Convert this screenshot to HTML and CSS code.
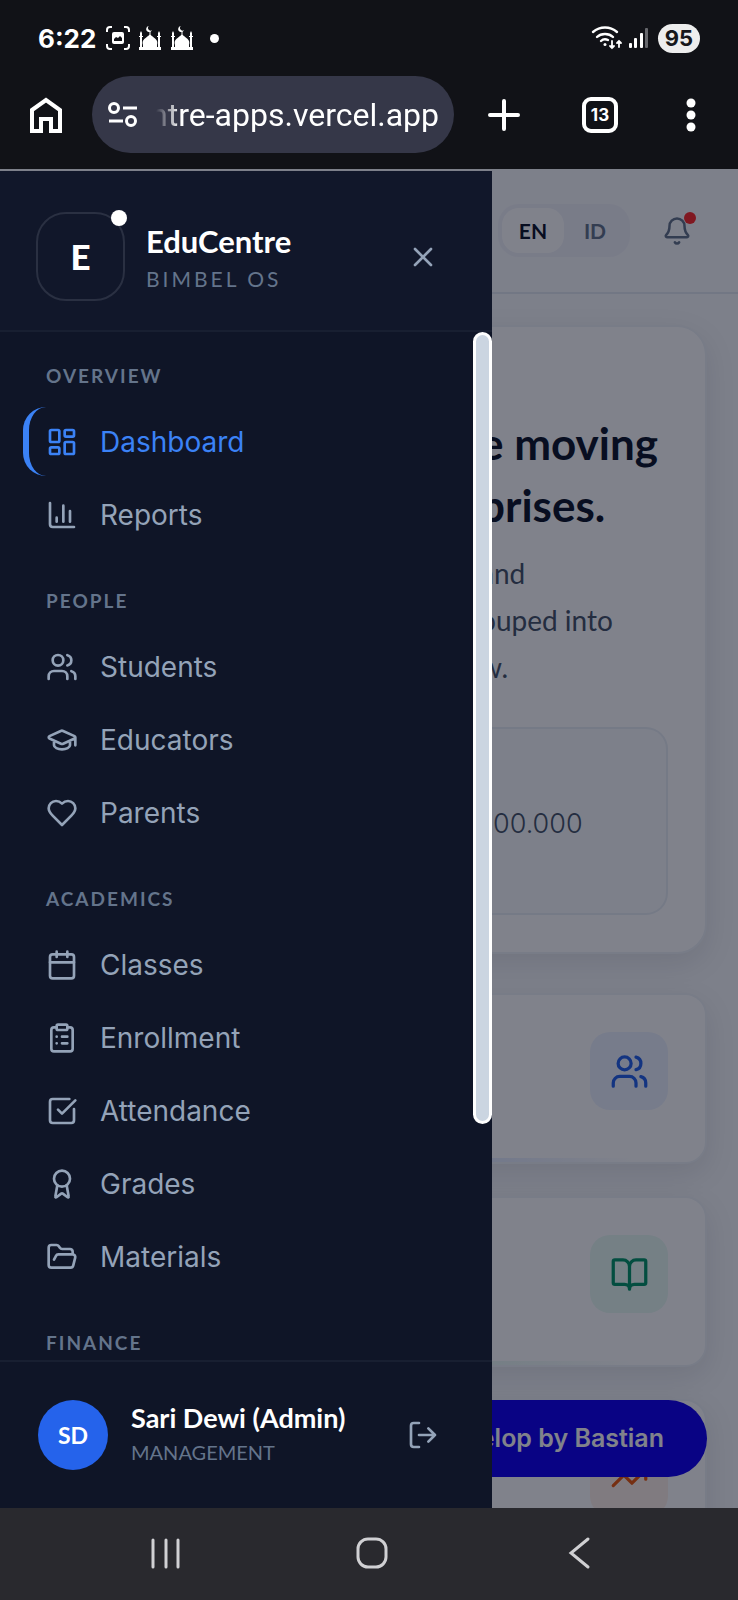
FILE: index.html
```html
<!DOCTYPE html>
<html lang="en">
<head>
    <meta charset="UTF-8">
    <meta name="viewport" content="width=device-width, initial-scale=1.0">
    <title>EduCentre</title>
    <link rel="stylesheet" href="styles.css">
</head>
<body>
    <!-- Shared shapes -->
    <svg class="defs" width="0" height="0">
        <symbol id="users" viewBox="0 0 24 24"><path d="M16 21v-2a4 4 0 0 0-4-4H6a4 4 0 0 0-4 4v2"/><circle cx="9" cy="7" r="4"/><path d="M22 21v-2a4 4 0 0 0-3-3.87M16 3.13a4 4 0 0 1 0 7.75"/></symbol>
        <symbol id="mosque" viewBox="0 0 22 24"><path d="M0 21h22v3H0zM1 7l1-2 1 2v14H1zM19 7l1-2 1 2v14h-2zM4 21v-2c-2-6 4-7 7-11 3 4 9 5 7 11v2zM0 10h4v1H0zM18 10h4v1h-4zM10.500 5h1v4h-1z"/><path d="M10 0a3 3 0 1 0 3 4 2.300 2.300 0 0 1-3-4z"/></symbol>
    </svg>

    <div class="status-bar">
        <span class="clock">6:22</span>
        <svg class="capture" viewBox="0 0 24 24"><path d="M1 6V4a3 3 0 0 1 3-3h2M18 1h2a3 3 0 0 1 3 3v2M23 18v2a3 3 0 0 1-3 3h-2M6 23H4a3 3 0 0 1-3-3v-2" fill="none" stroke="#fff" stroke-width="2"/><rect x="6" y="6" width="12" height="12" rx="2" fill="#fff"/><path d="M8 15v-2l2-2 2 1 2-2 2 2v3z" fill="#111217"/></svg>
        <svg class="mosque"><use href="#mosque"/></svg>
        <svg class="mosque"><use href="#mosque"/></svg>
        <span class="more-dot"></span>
        <div class="status-right">
            <svg width="32" height="26" viewBox="0 0 32 26" fill="none" stroke="#fff" stroke-width="2.400" stroke-linecap="round"><path d="M2 7c7-6 17-6 24 0M6 12c4-4 12-4 16 0M10 16c2-2 5-2 7-1"/><circle cx="14" cy="19.500" r="1.500" fill="#fff" stroke="none"/><path d="M21 16v7m-2-2 2 2 2-2M28 22v-6m-2 2 2-2 2 2" stroke-width="1.800"/></svg>
            <svg width="20" height="20" viewBox="0 0 20 20" fill="#fff"><rect y="15" width="3" height="5" rx="1"/><rect x="5" y="10" width="3" height="10" rx="1"/><rect x="11" y="5" width="3" height="15" rx="1"/><rect x="16" width="3" height="20" rx="1" fill="#66676c"/></svg>
            <span class="battery">95</span>
        </div>
    </div>

    <div class="browser-bar">
        <button class="bar-btn" aria-label="Home">
            <svg width="32" height="36" viewBox="0 0 32 36" fill="none" stroke="#fff" stroke-width="4"><path d="M2 13 16 3l14 10v21h-9V22H11v12H2z"/></svg>
        </button>
        <div class="address">
            <svg width="30" height="26" viewBox="0 0 30 26" fill="none" stroke="#fff" stroke-width="3"><circle cx="6" cy="6" r="4.500"/><path d="M15 6h14M1 19h14"/><circle cx="23" cy="19" r="4.500"/></svg>
            <span class="url">ntre-apps.vercel.app</span>
        </div>
        <button class="bar-btn new-tab" aria-label="New tab">
            <svg width="32" height="32" viewBox="0 0 32 32" stroke="#fff" stroke-width="4" stroke-linecap="round"><path d="M16 2v28M2 16h28"/></svg>
        </button>
        <button class="bar-btn tabs">13</button>
        <button class="bar-btn" aria-label="Menu">
            <svg width="10" height="34" viewBox="0 0 10 34" fill="#fff"><circle cx="5" cy="5" r="4.500"/><circle cx="5" cy="17" r="4.500"/><circle cx="5" cy="29" r="4.500"/></svg>
        </button>
    </div>

    <div class="screen">
        <div class="topbar">
            <div class="lang">
                <button class="lang-btn selected">EN</button>
                <button class="lang-btn">ID</button>
            </div>
            <button class="bell" aria-label="Notifications">
                <svg class="icon" viewBox="0 0 24 24"><path d="M10.270 21a2 2 0 0 0 3.460 0M3.260 15.330A1 1 0 0 0 4 17h16a1 1 0 0 0 .74-1.670C19.410 13.960 18 12.500 18 8A6 6 0 0 0 6 8c0 4.500-1.410 5.960-2.740 7.330"/></svg>
                <span class="bell-dot"></span>
            </button>
        </div>

        <main>
            <section class="card hero">
                <h1>e moving<br>prises.</h1>
                <p>and<br>ouped into<br>w.</p>
                <div class="amount">00.000</div>
            </section>
            <section class="card stat blue">
                <span class="tile"><svg class="icon"><use href="#users"/></svg></span>
            </section>
            <section class="card stat green">
                <span class="tile"><svg class="icon" viewBox="0 0 24 24"><path d="M12 7v14M3 18a1 1 0 0 1-1-1V4a1 1 0 0 1 1-1h5a4 4 0 0 1 4 4 4 4 0 0 1 4-4h5a1 1 0 0 1 1 1v13a1 1 0 0 1-1 1h-6a3 3 0 0 0-3 3 3 3 0 0 0-3-3z"/></svg></span>
            </section>
            <section class="card stat orange">
                <span class="tile"><svg class="icon" viewBox="0 0 24 24"><path d="m22 7-8.500 8.500-5-5L2 17M16 7h6v6"/></svg></span>
            </section>
        </main>

        <a class="credit" href="#">elop by Bastian</a>
        <div class="overlay"></div>

        <aside class="drawer">
            <div class="drawer-head">
                <div class="logo">E<span class="logo-dot"></span></div>
                <div class="brand">
                    <div class="brand-name">EduCentre</div>
                    <div class="brand-sub">BIMBEL OS</div>
                </div>
                <button class="drawer-btn" aria-label="Close">
                    <svg class="icon" viewBox="0 0 24 24"><path d="M18 6 6 18M6 6l12 12"/></svg>
                </button>
            </div>

            <div class="menu">
                <nav>
                    <h2>OVERVIEW</h2>
                    <a class="item active" href="#"><svg class="icon" viewBox="0 0 24 24"><rect x="3" y="3" width="7" height="9" rx="1"/><rect x="14" y="3" width="7" height="5" rx="1"/><rect x="14" y="12" width="7" height="9" rx="1"/><rect x="3" y="16" width="7" height="5" rx="1"/></svg>Dashboard</a>
                    <a class="item" href="#"><svg class="icon" viewBox="0 0 24 24"><path d="M3 3v16a2 2 0 0 0 2 2h16M8 17v-3M13 17V5M18 17V9"/></svg>Reports</a>

                    <h2>PEOPLE</h2>
                    <a class="item" href="#"><svg class="icon"><use href="#users"/></svg>Students</a>
                    <a class="item" href="#"><svg class="icon" viewBox="0 0 24 24"><path d="M21.400 10.900a1 1 0 0 0 0-1.800l-8.600-3.900a2 2 0 0 0-1.700 0l-8.500 3.900a1 1 0 0 0 0 1.800l8.600 3.900a2 2 0 0 0 1.700 0zM22 10v6M6 12.500V16a6 3 0 0 0 12 0v-3.500"/></svg>Educators</a>
                    <a class="item" href="#"><svg class="icon" viewBox="0 0 24 24"><path d="M19 14c1.500-1.500 3-3.200 3-5.500A5.500 5.500 0 0 0 16.500 3c-1.800 0-3 .5-4.500 2-1.500-1.500-2.700-2-4.500-2A5.500 5.500 0 0 0 2 8.500c0 2.300 1.500 4 3 5.500l7 7z"/></svg>Parents</a>

                    <h2>ACADEMICS</h2>
                    <a class="item" href="#"><svg class="icon" viewBox="0 0 24 24"><path d="M8 2v4M16 2v4M3 10h18"/><rect x="3" y="4" width="18" height="18" rx="2"/></svg>Classes</a>
                    <a class="item" href="#"><svg class="icon" viewBox="0 0 24 24"><rect x="8" y="2" width="8" height="4" rx="1"/><path d="M16 4h2a2 2 0 0 1 2 2v14a2 2 0 0 1-2 2H6a2 2 0 0 1-2-2V6a2 2 0 0 1 2-2h2M12 11h4M12 16h4M8 11h.01M8 16h.01"/></svg>Enrollment</a>
                    <a class="item" href="#"><svg class="icon" viewBox="0 0 24 24"><path d="M21 10.500V19a2 2 0 0 1-2 2H5a2 2 0 0 1-2-2V5a2 2 0 0 1 2-2h12.500M9 11l3 3L22 4"/></svg>Attendance</a>
                    <a class="item" href="#"><svg class="icon" viewBox="0 0 24 24"><path d="m15.500 12.900 1.500 8.500a.5.5 0 0 1-.8.500l-3.600-2.700a1 1 0 0 0-1.200 0l-3.600 2.700a.5.5 0 0 1-.8-.500l1.500-8.500"/><circle cx="12" cy="8" r="6"/></svg>Grades</a>
                    <a class="item" href="#"><svg class="icon" viewBox="0 0 24 24"><path d="m6 14 1.500-2.900A2 2 0 0 1 9.200 10H20a2 2 0 0 1 1.900 2.500l-1.500 6a2 2 0 0 1-2 1.500H4a2 2 0 0 1-2-2V5a2 2 0 0 1 2-2h3.900a2 2 0 0 1 1.700.9l.8 1.200a2 2 0 0 0 1.700.9H18a2 2 0 0 1 2 2v2"/></svg>Materials</a>

                    <h2>FINANCE</h2>
                </nav>
                <div class="scroll-thumb"></div>
            </div>

            <div class="drawer-foot">
                <div class="avatar">SD</div>
                <div class="user">
                    <div class="user-name">Sari Dewi (Admin)</div>
                    <div class="user-role">MANAGEMENT</div>
                </div>
                <button class="drawer-btn" aria-label="Log out">
                    <svg class="icon" viewBox="0 0 24 24"><path d="M9 21H5a2 2 0 0 1-2-2V5a2 2 0 0 1 2-2h4M16 17l5-5-5-5M21 12H9"/></svg>
                </button>
            </div>
        </aside>
    </div>

    <div class="system-nav">
        <button aria-label="Recents"><svg width="32" height="32" viewBox="0 0 32 32"><path d="M3 2v27M16 2v27M28 2v27"/></svg></button>
        <button aria-label="Home screen"><svg width="32" height="32" viewBox="0 0 32 32"><rect x="2" y="1" width="28" height="28" rx="10"/></svg></button>
        <button aria-label="Back"><svg width="32" height="32" viewBox="0 0 32 32"><path d="M25 1 8 15l17 14"/></svg></button>
    </div>
</body>
</html>
```
FILE: styles.css
```css
* {
    box-sizing: border-box;
}

body {
    margin: 0;
    height: 100vh;
    display: flex;
    flex-direction: column;
    background-color: #111217;
    font-family: Lato, "Open Sans", sans-serif;
    overflow: hidden;
}

button {
    background: none;
    border: none;
    padding: 0;
    font: inherit;
    color: inherit;
    cursor: pointer;
}

a {
    color: inherit;
    text-decoration: none;
}

svg {
    display: block;
    flex-shrink: 0;
    overflow: visible;
}

.defs {
    position: absolute;
}

.icon {
    width: 32px;
    height: 32px;
    fill: none;
    stroke: currentColor;
    stroke-width: 2;
    stroke-linecap: round;
    stroke-linejoin: round;
}

/* Android status bar */
.status-bar {
    height: 76px;
    padding: 0 38px;
    display: flex;
    align-items: center;
    color: #fff;
    font-family: Inter, sans-serif;
    flex-shrink: 0;
}

.clock {
    font-size: 26px;
    font-weight: 700;
    margin-right: 10px;
}

.capture {
    width: 24px;
    height: 24px;
    margin-right: 9px;
}

.mosque {
    width: 22px;
    height: 24px;
    margin-right: 10px;
    fill: #fff;
}

.more-dot {
    width: 9px;
    height: 9px;
    margin-left: 7px;
    border-radius: 50%;
    background-color: #fff;
}

.status-right {
    margin-left: auto;
    display: flex;
    align-items: center;
    gap: 6px;
}

.battery {
    width: 42px;
    height: 29px;
    line-height: 29px;
    margin-left: 3px;
    border-radius: 15px;
    background-color: #ededed;
    color: #16171b;
    font-size: 22px;
    font-weight: 700;
    text-align: center;
}

/* Browser toolbar */
.browser-bar {
    height: 93px;
    padding: 0 42px 16px 30px;
    display: flex;
    align-items: center;
    flex-shrink: 0;
}

.address {
    flex: 1;
    min-width: 0;
    height: 77px;
    margin: 0 34px 0 30px;
    padding: 0 15px 0 16px;
    display: flex;
    align-items: center;
    justify-content: space-between;
    gap: 18px;
    border-radius: 39px;
    background-color: #353748;
    color: #fff;
}

/* The start of the address fades out on the left */
.url {
    display: flex;
    flex: 1;
    min-width: 0;
    justify-content: flex-end;
    overflow: hidden;
    white-space: nowrap;
    font-family: Roboto, sans-serif;
    font-size: 32px;
    -webkit-mask-image: linear-gradient(to right, transparent, #000 24px);
    mask-image: linear-gradient(to right, transparent, #000 24px);
}

.tabs {
    width: 36px;
    height: 36px;
    margin: 0 68px 0 62px;
    border: 4px solid #fff;
    border-radius: 9px;
    color: #fff;
    font-family: Inter, sans-serif;
    font-size: 17px;
    font-weight: 700;
}

/* Web page */
.screen {
    flex: 1;
    min-height: 0;
    position: relative;
    overflow: hidden;
    background-color: #f8fafc;
}

.topbar {
    height: 125px;
    padding: 0 46px 0 0;
    display: flex;
    align-items: center;
    justify-content: flex-end;
    border-bottom: 2px solid #e2e8f0;
}

.lang {
    display: flex;
    padding: 4px;
    margin-right: 32px;
    border-radius: 21px;
    background-color: #f1f2f9;
}

.lang-btn {
    width: 62px;
    height: 45px;
    border-radius: 17px;
    color: #64748b;
    font-size: 21px;
    font-weight: 700;
}

.lang-btn.selected {
    background-color: #fff;
    color: #0f172a;
}

.bell {
    position: relative;
    color: #64748b;
}

.bell .icon {
    width: 30px;
    height: 30px;
}

.bell-dot {
    position: absolute;
    top: -4px;
    right: -4px;
    width: 12px;
    height: 12px;
    border-radius: 50%;
    background-color: #ff2a2a;
}

main {
    padding: 31px 31px 0;
    display: flex;
    flex-direction: column;
    gap: 32px;
}

.card {
    border: 2px solid #eef2f7;
    border-radius: 22px;
    background-color: #fff;
    box-shadow: 0 10px 30px rgba(15, 23, 42, 0.1);
}

.hero {
    height: 629px;
    margin-bottom: 7px;
    padding: 85px 37px 37px 447px;
    border-radius: 30px;
    color: #475569;
}

.hero h1 {
    margin: 0 0 14px;
    font-size: 44px;
    line-height: 62px;
    font-weight: 700;
    color: #0f172a;
}

.hero p {
    margin: 0 0 36px;
    font-size: 28px;
    line-height: 47px;
}

.amount {
    height: 188px;
    padding: 0 13px;
    border: 2px solid #e9eef4;
    border-left: none;
    border-radius: 0 22px 22px 0;
    background-color: #f8fafc;
    font-family: Inter, sans-serif;
    font-size: 27px;
    font-weight: 300;
    line-height: 190px;
}

.stat {
    height: 171px;
    padding: 37px;
    display: flex;
    justify-content: flex-end;
    background-repeat: no-repeat;
    background-position: bottom;
    background-size: 100% 4px;
}

.tile {
    width: 78px;
    height: 78px;
    display: flex;
    align-items: center;
    justify-content: center;
    border-radius: 20px;
}

.tile .icon {
    width: 39px;
    height: 39px;
}

.blue {
    color: #2563eb;
    background-image: linear-gradient(to right, #93b4fb, #fff 90%);
}

.blue .tile {
    background-color: #edf3ff;
}

.green {
    color: #059669;
    background-image: linear-gradient(to right, #a7e3cd, #fff 90%);
}

.green .tile {
    background-color: #e8faf3;
}

.orange {
    color: #ea580c;
}

.orange .tile {
    background-color: #fff1e8;
}

.credit {
    position: absolute;
    right: 31px;
    bottom: 31px;
    width: 230px;
    height: 77px;
    padding-right: 43px;
    border-radius: 0 39px 39px 0;
    background-color: #1000f0;
    color: #fff;
    font-family: Inter, sans-serif;
    font-size: 25px;
    font-weight: 600;
    line-height: 77px;
    text-align: right;
}

.overlay {
    position: absolute;
    inset: 0;
    background-color: rgba(2, 6, 23, 0.5);
}

/* Slide-in drawer */
.drawer {
    position: absolute;
    top: 2px;
    bottom: 0;
    left: 0;
    width: 492px;
    display: flex;
    flex-direction: column;
    background-color: #0f1527;
    color: #94a3b8;
}

.drawer-head {
    height: 161px;
    padding: 12px 53px 0 36px;
    display: flex;
    align-items: center;
    border-bottom: 2px solid #181f31;
    background-color: #11172a;
}

.logo {
    position: relative;
    width: 89px;
    height: 89px;
    margin-right: 21px;
    border: 2px solid #2a3042;
    border-radius: 30px;
    color: #fff;
    font-size: 35px;
    font-weight: 900;
    line-height: 85px;
    text-align: center;
}

.logo-dot {
    position: absolute;
    top: -4px;
    right: -4px;
    width: 16px;
    height: 16px;
    border-radius: 50%;
    background-color: #fff;
}

.brand {
    padding-top: 6px;
}

.brand-name {
    color: #fff;
    font-size: 31px;
    font-weight: 700;
    line-height: 38px;
}

.brand-sub {
    color: #64748b;
    font-size: 21px;
    line-height: 38px;
    letter-spacing: 3px;
}

.drawer-btn {
    margin-left: auto;
}

.menu {
    position: relative;
    flex: 1;
    min-height: 0;
    overflow: hidden;
}

nav {
    padding: 0 23px;
    display: flex;
    flex-direction: column;
    gap: 4px;
}

nav h2 {
    margin: 34px 0 13px;
    padding-left: 23px;
    color: #64748b;
    font-size: 19px;
    line-height: 28px;
    font-weight: 700;
    letter-spacing: 2px;
}

nav h2:first-child {
    margin-top: 30px;
}

.item {
    height: 69px;
    padding-left: 17px;
    display: flex;
    align-items: center;
    gap: 22px;
    border-left: 6px solid transparent;
    border-radius: 23px;
    font-family: Inter, sans-serif;
    font-size: 28px;
}

.item.active {
    border-left-color: #3b82f6;
    color: #3b82f6;
}

.scroll-thumb {
    position: absolute;
    top: 0;
    right: 0;
    width: 19px;
    height: 77%;
    border: 3px solid #fff;
    border-radius: 10px;
    background-color: #cbd5e1;
}

.drawer-foot {
    height: 148px;
    padding: 0 53px 0 38px;
    display: flex;
    align-items: center;
    border-top: 2px solid #181f31;
}

.avatar {
    width: 70px;
    height: 70px;
    margin-right: 23px;
    border-radius: 50%;
    background-color: #2563eb;
    color: #fff;
    font-size: 23px;
    font-weight: 700;
    line-height: 70px;
    text-align: center;
}

.user-name {
    color: #fff;
    font-size: 27px;
    font-weight: 700;
    line-height: 34px;
}

.user-role {
    color: #64748b;
    font-size: 20px;
    line-height: 34px;
}

/* Android navigation bar */
.system-nav {
    height: 92px;
    padding: 0 56px 0 63px;
    display: grid;
    grid-template-columns: repeat(3, 1fr);
    background-color: #29292e;
    flex-shrink: 0;
}

.system-nav button {
    display: flex;
    align-items: center;
    justify-content: center;
}

.system-nav svg {
    fill: none;
    stroke: #d0d0d3;
    stroke-width: 3;
    stroke-linecap: round;
}
```
